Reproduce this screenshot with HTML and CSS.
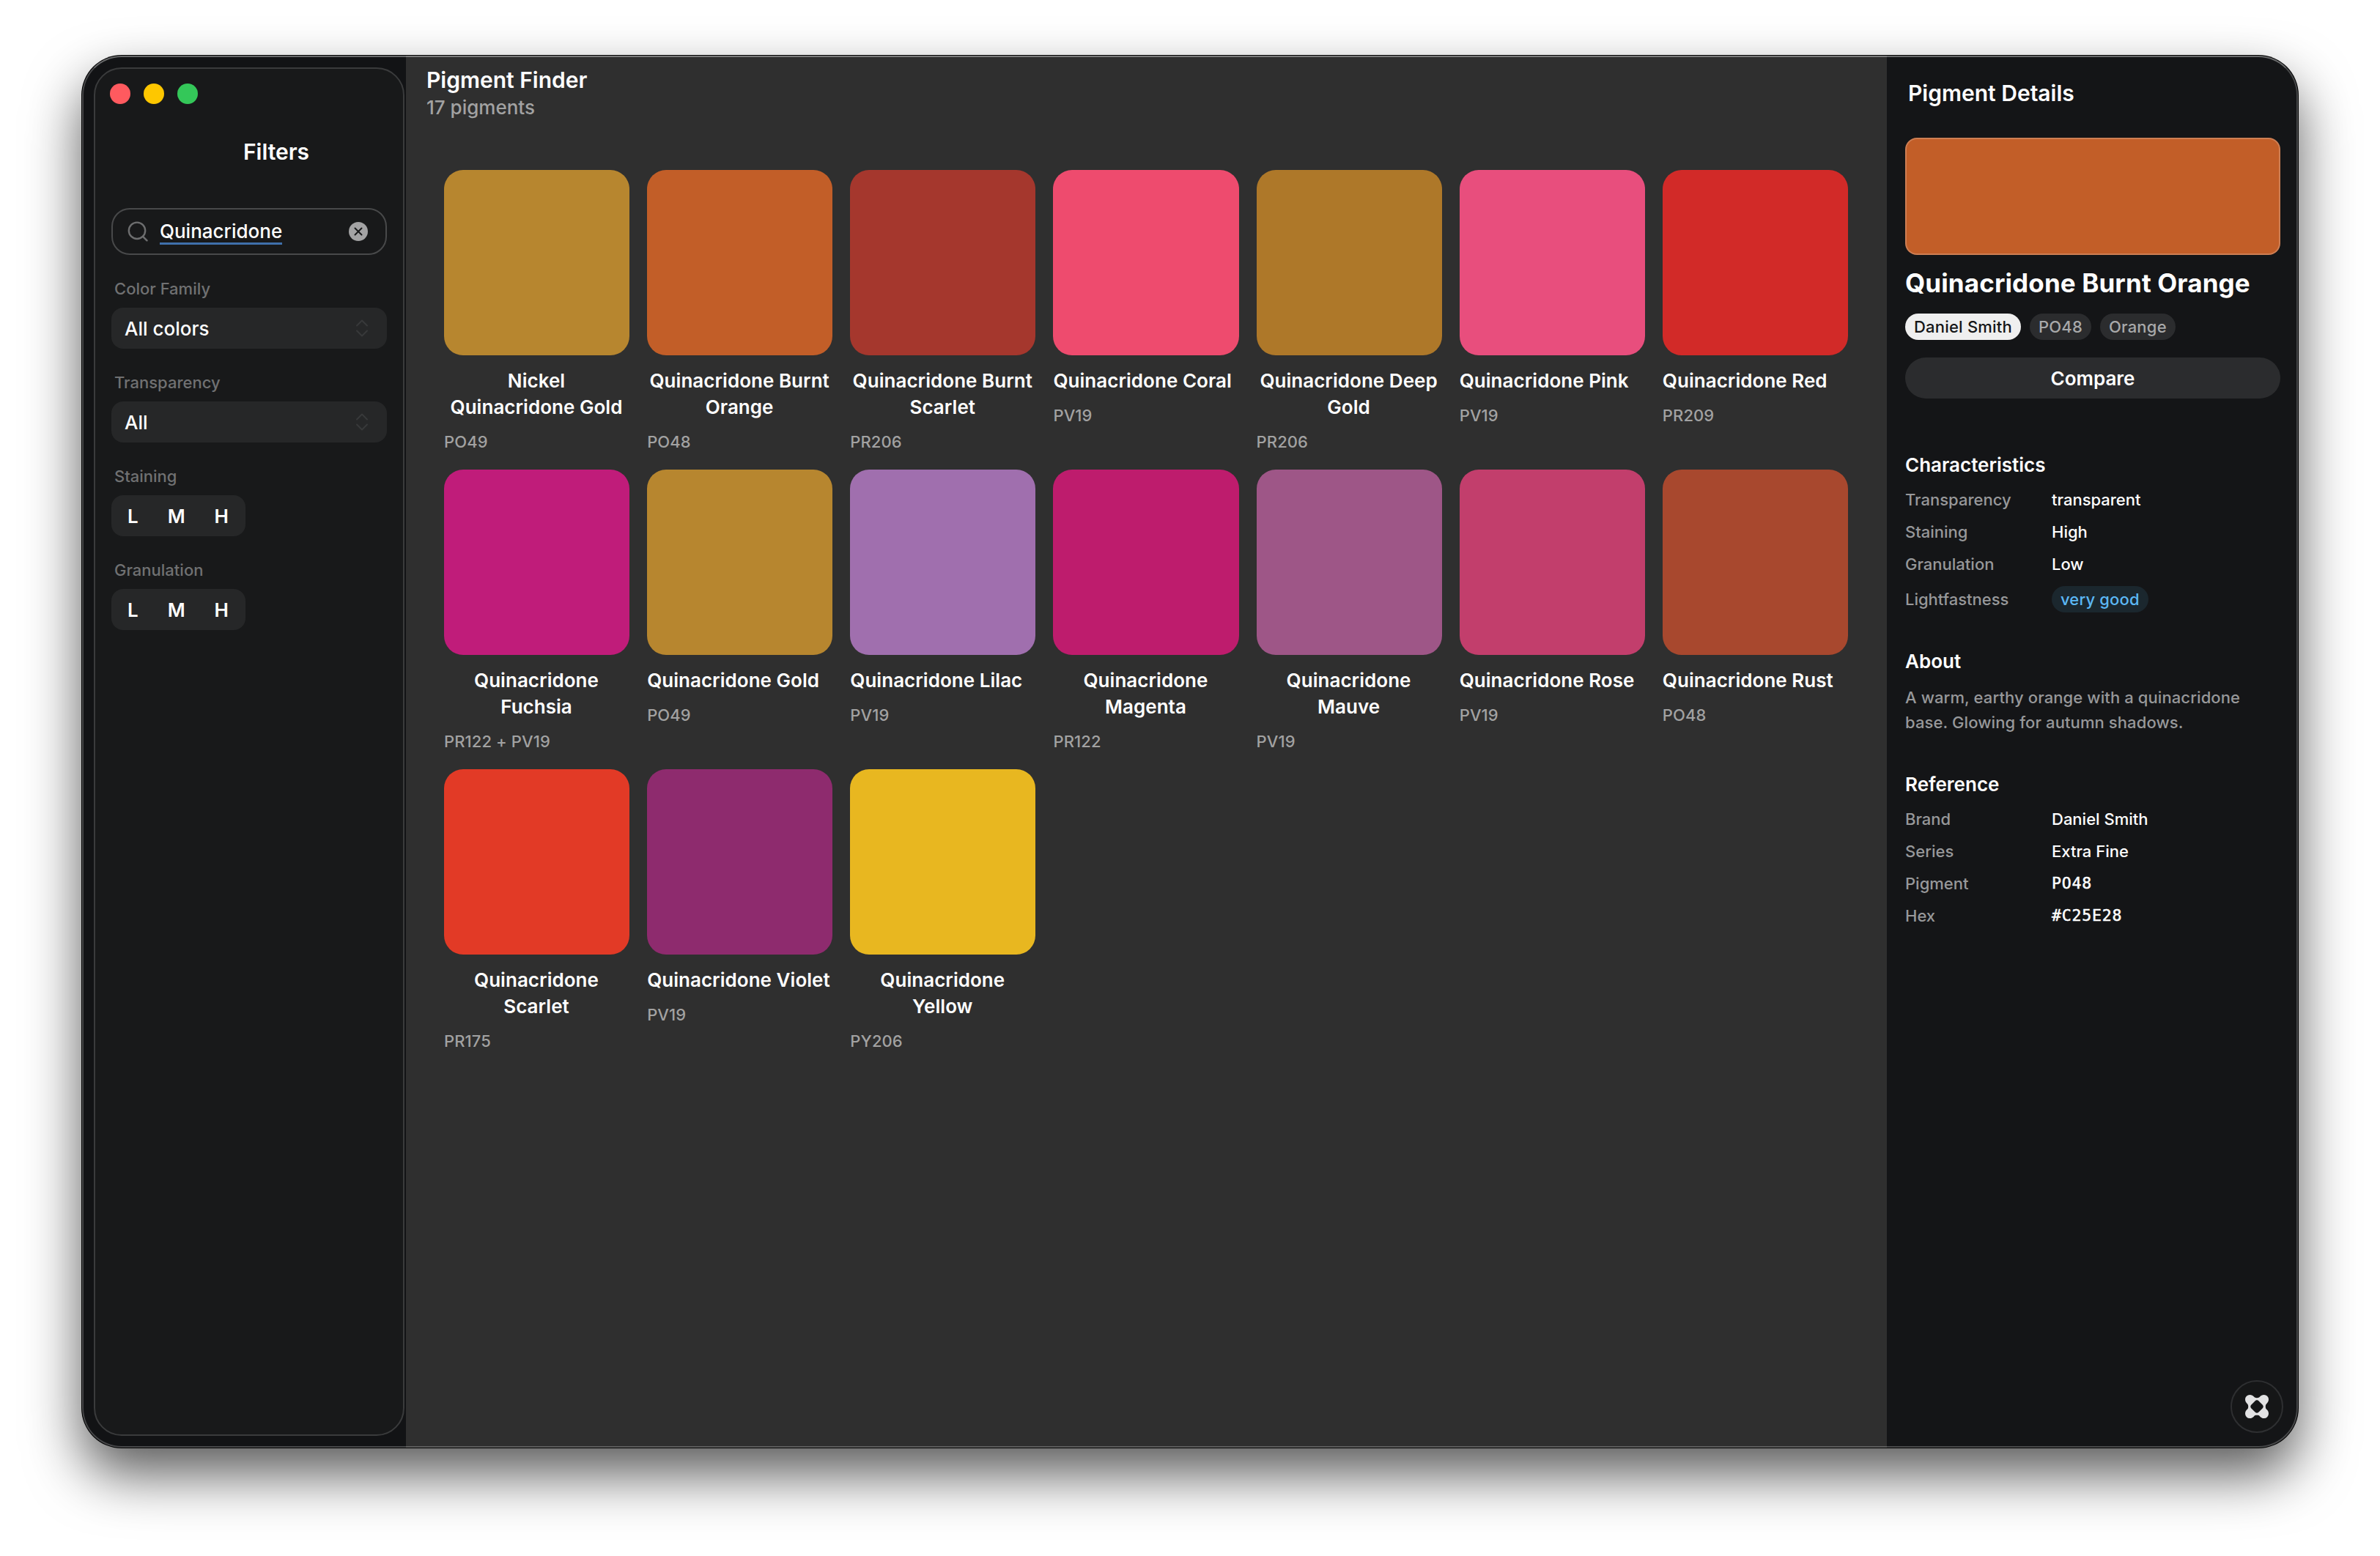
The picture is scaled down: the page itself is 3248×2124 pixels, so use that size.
FILE: index.html
```html
<!DOCTYPE html>
<html lang="en">
<head>
<meta charset="utf-8">
<title>Pigment Finder</title>
<link rel="stylesheet" href="styles.css">
</head>
<body>
<div class="window">
  <aside class="sidebar">
    <div class="panel">
      <div class="lights"><i class="light red"></i><i class="light yellow"></i><i class="light green"></i></div>
      <h2 class="panel-title">Filters</h2>
      <div class="search">
        <svg class="search-icon" width="28" height="28" viewBox="0 0 28 28" fill="none" stroke="#6d6e6f" stroke-width="2.4" stroke-linecap="round"><circle cx="13" cy="12.8" r="11.2"/><path d="M21 20.800L26.500 26.300"/></svg>
        <span class="query">Quinacridone</span>
        <svg class="clear" width="26" height="26" viewBox="0 0 26 26"><circle cx="13" cy="13" r="13" fill="#a3a3a4"/><path d="M8.500 8.500L17.500 17.500M17.500 8.500L8.500 17.500" stroke="#18191a" stroke-width="2" stroke-linecap="round"/></svg>
      </div>
      <div class="field">
        <label>Color Family</label>
        <div class="select"><span>All colors</span><svg width="18" height="24" viewBox="0 0 18 24" fill="none" stroke="#38393a" stroke-width="2" stroke-linecap="round" stroke-linejoin="round"><path d="M2 8.500L9 1.500L16 8.500M2 15.500L9 22.500L16 15.500"/></svg></div>
      </div>
      <div class="field">
        <label>Transparency</label>
        <div class="select"><span>All</span><svg width="18" height="24" viewBox="0 0 18 24" fill="none" stroke="#38393a" stroke-width="2" stroke-linecap="round" stroke-linejoin="round"><path d="M2 8.500L9 1.500L16 8.500M2 15.500L9 22.500L16 15.500"/></svg></div>
      </div>
      <div class="field">
        <label>Staining</label>
        <div class="segments"><span>L</span><span>M</span><span>H</span></div>
      </div>
      <div class="field">
        <label>Granulation</label>
        <div class="segments"><span>L</span><span>M</span><span>H</span></div>
      </div>
    </div>
  </aside>
  <main class="main">
    <header class="main-header">
      <h1>Pigment Finder</h1>
      <p>17 pigments</p>
    </header>
    <div class="grid">
      <div class="card"><div class="swatch" style="background:#b7862f"></div><div class="name">Nickel<br>Quinacridone Gold</div><div class="code">PO49</div></div>
      <div class="card"><div class="swatch" style="background:#c25e28"></div><div class="name">Quinacridone Burnt<br>Orange</div><div class="code">PO48</div></div>
      <div class="card"><div class="swatch" style="background:#a5372d"></div><div class="name">Quinacridone Burnt<br>Scarlet</div><div class="code">PR206</div></div>
      <div class="card"><div class="swatch" style="background:#ee4b6e"></div><div class="name">Quinacridone Coral</div><div class="code">PV19</div></div>
      <div class="card"><div class="swatch" style="background:#ae7829"></div><div class="name">Quinacridone Deep<br>Gold</div><div class="code">PR206</div></div>
      <div class="card"><div class="swatch" style="background:#e84e7d"></div><div class="name">Quinacridone Pink</div><div class="code">PV19</div></div>
      <div class="card"><div class="swatch" style="background:#d22a28"></div><div class="name">Quinacridone Red</div><div class="code">PR209</div></div>
      <div class="card"><div class="swatch" style="background:#c01c7a"></div><div class="name">Quinacridone<br>Fuchsia</div><div class="code">PR122 + PV19</div></div>
      <div class="card"><div class="swatch" style="background:#b7862f"></div><div class="name">Quinacridone Gold</div><div class="code">PO49</div></div>
      <div class="card"><div class="swatch" style="background:#a06fae"></div><div class="name">Quinacridone Lilac</div><div class="code">PV19</div></div>
      <div class="card"><div class="swatch" style="background:#be1c6d"></div><div class="name">Quinacridone<br>Magenta</div><div class="code">PR122</div></div>
      <div class="card"><div class="swatch" style="background:#9e5687"></div><div class="name">Quinacridone<br>Mauve</div><div class="code">PV19</div></div>
      <div class="card"><div class="swatch" style="background:#c23e6c"></div><div class="name">Quinacridone Rose</div><div class="code">PV19</div></div>
      <div class="card"><div class="swatch" style="background:#a8482e"></div><div class="name">Quinacridone Rust</div><div class="code">PO48</div></div>
      <div class="card"><div class="swatch" style="background:#e23a26"></div><div class="name">Quinacridone<br>Scarlet</div><div class="code">PR175</div></div>
      <div class="card"><div class="swatch" style="background:#8e2b6e"></div><div class="name">Quinacridone Violet</div><div class="code">PV19</div></div>
      <div class="card"><div class="swatch" style="background:#e8b720"></div><div class="name">Quinacridone<br>Yellow</div><div class="code">PY206</div></div>
    </div>
  </main>
  <aside class="details">
    <h2 class="details-title">Pigment Details</h2>
    <div class="hero"></div>
    <h3 class="pigment">Quinacridone Burnt Orange</h3>
    <div class="chips"><span class="chip active">Daniel Smith</span><span class="chip">PO48</span><span class="chip">Orange</span></div>
    <div class="compare">Compare</div>
    <section class="section characteristics">
      <h4>Characteristics</h4>
      <dl>
        <dt>Transparency</dt><dd>transparent</dd>
        <dt>Staining</dt><dd>High</dd>
        <dt>Granulation</dt><dd>Low</dd>
        <dt class="tall">Lightfastness</dt><dd class="tall"><span class="badge">very good</span></dd>
      </dl>
    </section>
    <section class="section about">
      <h4>About</h4>
      <p>A warm, earthy orange with a quinacridone<br>base. Glowing for autumn shadows.</p>
    </section>
    <section class="section reference">
      <h4>Reference</h4>
      <dl>
        <dt>Brand</dt><dd>Daniel Smith</dd>
        <dt>Series</dt><dd>Extra Fine</dd>
        <dt>Pigment</dt><dd class="mono">PO48</dd>
        <dt>Hex</dt><dd class="mono">#C25E28</dd>
      </dl>
    </section>
    <div class="fab"><svg width="32" height="32" viewBox="0 0 32 32"><path fill="#e2e2e3" fill-rule="evenodd" d="M6.300 0C8.800 0 10.600 1.200 11.900 2.600C13 3.800 14 4.200 16 4.200C18 4.200 19 3.800 20.100 2.600C21.400 1.200 23.200 0 25.700 0A6.300 6.300 0 0 1 32 6.300C32 8.800 30.800 10.600 29.400 11.900C28.200 13 27.800 14 27.800 16C27.800 18 28.200 19 29.400 20.100C30.800 21.400 32 23.200 32 25.700A6.300 6.300 0 0 1 25.700 32C23.200 32 21.400 30.800 20.100 29.400C19 28.200 18 27.800 16 27.800C14 27.800 13 28.200 11.900 29.400C10.600 30.800 8.800 32 6.300 32A6.300 6.300 0 0 1 0 25.700C0 23.200 1.200 21.400 2.600 20.100C3.800 19 4.200 18 4.200 16C4.200 14 3.800 13 2.600 11.900C1.200 10.600 0 8.800 0 6.300A6.300 6.300 0 0 1 6.300 0ZM16 7.300C14.700 7.300 14 7.900 13.200 8.700L8.700 13.200C7.900 14 7.300 14.700 7.300 16C7.300 17.300 7.900 18 8.700 18.800L13.200 23.300C14 24.100 14.700 24.700 16 24.700C17.300 24.700 18 24.100 18.800 23.300L23.300 18.800C24.100 18 24.700 17.300 24.700 16C24.700 14.700 24.100 14 23.300 13.200L18.800 8.700C18 7.900 17.300 7.300 16 7.300Z"/></svg></div>
  </aside>
</div>
</body>
</html>
```
FILE: styles.css
```css
* { box-sizing: border-box; margin: 0; padding: 0; }
body {
  width: 3248px;
  height: 2124px;
  padding: 76px 112px 148px;
  background: #fff;
  font-family: Inter, "Liberation Sans", sans-serif;
  font-size: 26px;
  font-weight: 500;
  color: #fff;
  overflow: hidden;
}
.window {
  position: relative;
  display: flex;
  width: 3024px;
  height: 1900px;
  border-radius: 54px;
  overflow: hidden;
  background: #141517;
  box-shadow: 0 0 0 1px #000, 0 36px 76px rgba(0, 0, 0, .65);
}
/* light rim along the window edge */
.window::after {
  content: "";
  position: absolute;
  inset: 0;
  border: 2px solid rgba(255, 255, 255, .22);
  border-top-color: rgba(255, 255, 255, .36);
  border-radius: 54px;
}

/* sidebar */
.sidebar { width: 442px; padding: 16px 2px 16px 16px; background: #121315; }
.panel {
  height: 100%;
  padding: 20px 22px;
  border: 2px solid #3a3b3c;
  border-radius: 38px;
  background: #18191a;
}
.lights { display: flex; gap: 18px; }
.light { width: 28px; height: 28px; border-radius: 50%; }
.red { background: #ff5a5f; margin-left: -2px; }
.yellow { background: #fec700; }
.green { background: #34c759; }
.panel-title { margin: 45px 0 0 74px; height: 40px; font-size: 30px; line-height: 40px; font-weight: 600; text-align: center; }
.search {
  display: flex;
  align-items: center;
  height: 64px;
  margin-top: 57px;
  padding: 0 24px 0 20px;
  border: 2px solid #48494a;
  border-radius: 25px;
}
.search-icon { margin-right: 16px; }
.query { line-height: 32px; height: 32px; box-shadow: 0 -1px 0 #3f70ab inset, 0 2px 0 #3f70ab; }
.clear { margin-left: auto; }
.field { height: 128px; padding-top: 30px; }
.field label { display: block; height: 42px; line-height: 32px; padding-left: 4px; font-size: 22px; color: #707172; }
.select {
  display: flex;
  align-items: center;
  justify-content: space-between;
  height: 56px;
  padding: 0 25px 0 18px;
  border-radius: 16px;
  background: #262728;
}
.segments { display: flex; justify-content: space-between; align-items: center; width: 183px; height: 56px; padding: 0 23px 0 22px; border-radius: 16px; background: #262728; font-weight: 600; }

/* pigment grid */
.main { width: 2021px; background: #2f2f2f; }
.main-header { height: 156px; padding: 14px 28px 0; }
.main-header h1 { font-size: 30px; line-height: 38px; font-weight: 600; }
.main-header p { margin-top: 1px; line-height: 36px; color: #a2a2a2; }
.grid {
  display: grid;
  grid-template-columns: repeat(7, 253.15px);
  grid-auto-rows: 409px;
  column-gap: 24px;
  padding-left: 52px;
}
.swatch { height: 253px; border-radius: 26px; }
.name { width: fit-content; margin-top: 17px; line-height: 36px; font-weight: 600; letter-spacing: .03px; text-align: center; white-space: nowrap; }
.card .name:has(br) { width: 252px; }
.code { margin-top: 14px; font-size: 22px; line-height: 30px; letter-spacing: .1px; color: #a2a2a2; }

/* details */
.details { position: relative; flex: 1; padding: 0 24px 0 25px; background: #141517; }
.details-title { height: 112px; padding: 31px 0 0 4px; font-size: 30px; line-height: 40px; font-weight: 600; }
.hero { height: 160px; border: 2px solid rgba(255, 255, 255, .2); border-radius: 16px; background: #c25e28; background-clip: border-box; }
.pigment { margin-top: 14px; height: 48px; font-size: 35px; line-height: 48px; font-weight: 700; letter-spacing: .12px; white-space: nowrap; }
.chips { display: flex; gap: 12px; margin-top: 18px; }
.chip { height: 36px; padding: 0 12px; border-radius: 18px; font-size: 22px; line-height: 36px; letter-spacing: .2px; background: #2b2c2e; color: #a8a9aa; }
.chip.active { background: #efefef; color: #141517; }
.compare { margin-top: 24px; height: 56px; border-radius: 28px; background: #2b2c2e; line-height: 57px; font-weight: 600; text-align: center; }
.section h4 { font-size: 26px; line-height: 36px; font-weight: 600; }
.section dl { display: grid; grid-template-columns: 200px 1fr; grid-auto-rows: 44px; font-size: 22px; line-height: 44px; }
.section dt { color: #97989a; }
.section dd { white-space: nowrap; }
.section .tall { height: 52px; line-height: 52px; }
.characteristics { margin-top: 73px; }
.characteristics h4, .reference h4 { margin-bottom: 7px; }
.badge { display: inline-block; height: 36px; padding: 0 12px; border-radius: 18px; line-height: 36px; letter-spacing: .15px; background: #1b272e; color: #5bb8f5; }
.about { margin-top: 49px; height: 168px; }
.about p { margin-top: 14px; font-size: 22px; line-height: 34px; letter-spacing: .1px; color: #97989a; white-space: nowrap; }
.section .mono { font-family: "DejaVu Sans Mono", "Liberation Mono", monospace; font-size: 21.5px; letter-spacing: .8px; -webkit-text-stroke: .5px #fff; }
/* floating action over the panel */
.fab {
  position: absolute;
  right: 20px;
  bottom: 20px;
  display: flex;
  align-items: center;
  justify-content: center;
  width: 72px;
  height: 72px;
  border: 2px solid #2e2f31;
  border-radius: 50%;
  background: #151617;
}
```
